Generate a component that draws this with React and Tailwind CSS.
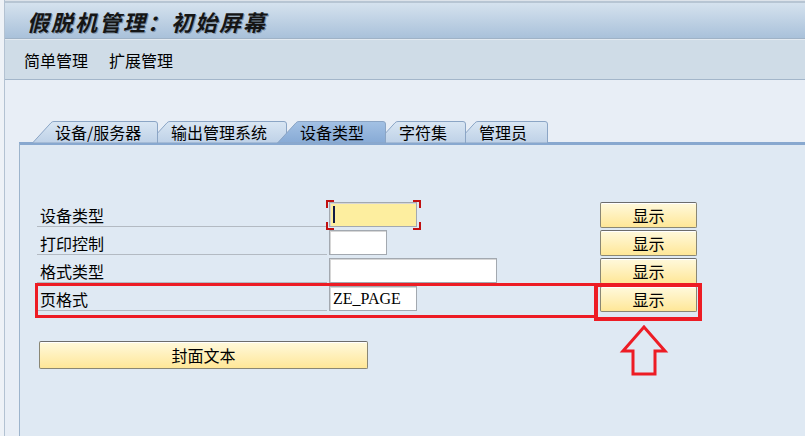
import React from "react";

const tabs = [
  { label: "设备/服务器", w: "w-[126px]", width: 126, z: "z-50", first: true },
  { label: "输出管理系统", w: "w-[139px]", width: 139, z: "z-40" },
  { label: "设备类型", w: "w-[109px]", width: 109, z: "z-[60]", active: true },
  { label: "字符集", w: "w-[90px]", width: 90, z: "z-20" },
  { label: "管理员", w: "w-[92px]", width: 92, z: "z-10" },
];

function Tab({ t, i }) {
  const W = t.width;
  const gid = `tg${i}`;
  return (
    <div className={`relative h-[21px] ${t.w} ${t.z} ${t.first ? "" : "-ml-[10px]"} flex items-center pl-[23px]`}>
      <svg className="absolute left-0 top-0" width={W} height={22} viewBox={`0 0 ${W} 22`}>
        <defs>
          <linearGradient id={gid} x1="0" y1="0" x2="0" y2="1">
            <stop offset="0" stopColor={t.active ? "#a3c1e4" : "#d9e6f3"} />
            <stop offset="1" stopColor={t.active ? "#87aad5" : "#bed1e7"} />
          </linearGradient>
        </defs>
        <path
          d={`M0.5 22 L19 1.8 Q20 0.5 22 0.5 L${W - 3} 0.5 Q${W - 0.5} 0.5 ${W - 0.5} 3 L${W - 0.5} 22 Z`}
          fill={`url(#${gid})`}
          stroke="#8ba5c5"
          strokeWidth="1"
        />
      </svg>
      <span className="relative text-[16px] leading-none text-black">{t.label}</span>
    </div>
  );
}

function Field({ w, yellow, children }) {
  return (
    <div
      className={`relative ${w} h-[25px] border border-[#a3a9b0] shadow-[inset_1px_1px_0_#d6d6d6] ${
        yellow ? "bg-[#fdee9f]" : "bg-white"
      } flex items-center pl-[3px]`}
    >
      {children}
    </div>
  );
}

function Btn({ children, className = "" }) {
  return (
    <div
      className={`h-[26px] flex items-center justify-center rounded-[2px] border border-[#8a8774] border-t-[#6c6c6c] bg-gradient-to-b from-[#fff9dc] to-[#ffe797] shadow-[inset_0_1px_0_#ffffff] text-[16px] leading-none text-black ${className}`}
    >
      {children}
    </div>
  );
}

function Row({ label, field }) {
  return (
    <div className="flex items-start h-[28px]">
      <div className="w-[290px] h-[28px] border-b border-[#b3bac2] flex items-center pt-[4px] pl-[3px] text-[16px] leading-none text-black">
        {label}
      </div>
      <div className="w-[273px] pt-[3px] pl-[2px]">{field}</div>
      <div className="pt-[3px]">
        <Btn className="w-[97px]">显示</Btn>
      </div>
    </div>
  );
}

export default function App() {
  return (
    <div className="relative w-[805px] h-[436px] overflow-hidden flex bg-[#e8eef6] font-['Noto_Sans_CJK_SC','Noto_Sans',sans-serif]">
      <div className="w-[4px] bg-[#eef2f7]" />
      <div className="w-px bg-[#b3c2d2]" />
      <div className="flex-1 flex flex-col">
        <div className="h-px bg-[#dde3ea]" />
        <div className="h-[2px] bg-[#b7c5d3]" />
        <div className="h-[35px] bg-gradient-to-b from-[#d5e2ee] to-[#a9c1da] flex items-center pl-[22px]">
          <span className="text-[22px] leading-none font-bold italic tracking-[2px] text-[#151515] [text-shadow:1px_1px_0_#7f93a8]">
            假脱机管理：初始屏幕
          </span>
        </div>
        <div className="h-px bg-[#9fb2c6]" />
        <div className="h-px bg-[#e3eaf1]" />
        <div className="h-[40px] bg-[#cfdce7] border-b border-[#a3b6ca] flex items-center pl-[19px] gap-[21px] text-[16px] leading-none text-black">
          <span>简单管理</span>
          <span>扩展管理</span>
        </div>
        <div className="flex-1 flex flex-col pt-[41px] pl-[14px]">
          <div className="flex h-[21px] pl-[13px]">
            {tabs.map((t, i) => (
              <Tab key={t.label} t={t} i={i} />
            ))}
          </div>
          <div className="flex-1 border-t-[3px] border-t-[#88a8cf] border-l border-l-[#9db4cc] bg-[#dfe9f3] pt-[54px] pl-[17px]">
            <Row
              label="设备类型"
              field={
                <div className="relative w-[88px]">
                  <Field w="w-[88px]" yellow>
                    <span className="w-[2px] h-[17px] bg-[#101a45]" />
                  </Field>
                  <span className="absolute -left-[3px] -top-[2px] w-[8px] h-[8px] border-l-2 border-t-2 border-[#c01010]" />
                  <span className="absolute -right-[4px] -top-[2px] w-[8px] h-[8px] border-r-2 border-t-2 border-[#c01010]" />
                  <span className="absolute -left-[3px] -bottom-[3px] w-[8px] h-[8px] border-l-2 border-b-2 border-[#c01010]" />
                  <span className="absolute -right-[4px] -bottom-[3px] w-[8px] h-[8px] border-r-2 border-b-2 border-[#c01010]" />
                </div>
              }
            />
            <Row label="打印控制" field={<Field w="w-[58px]" />} />
            <Row label="格式类型" field={<Field w="w-[168px]" />} />
            <Row
              label="页格式"
              field={
                <Field w="w-[88px]">
                  <span className="font-['Liberation_Serif',serif] text-[16px] leading-none text-black">ZE_PAGE</span>
                </Field>
              }
            />
            <Btn className="w-[329px] h-[28px] mt-[30px] ml-[2px]">封面文本</Btn>
          </div>
        </div>
      </div>

      {/* annotations */}
      <div className="absolute left-[35px] top-[283px] w-[562px] h-[35px] border-[3px] border-[#ed1c24]" />
      <div className="absolute left-[594px] top-[283px] w-[108px] h-[38px] border-[4px] border-[#ed1c24]" />
      <svg className="absolute left-[619px] top-[324px]" width="50" height="54" viewBox="0 0 50 54">
        <polygon
          points="25,3 4,27 14,27 14,50 36,50 36,27 46,27"
          fill="none"
          stroke="#ed1c24"
          strokeWidth="3"
          strokeLinejoin="miter"
        />
      </svg>
    </div>
  );
}
